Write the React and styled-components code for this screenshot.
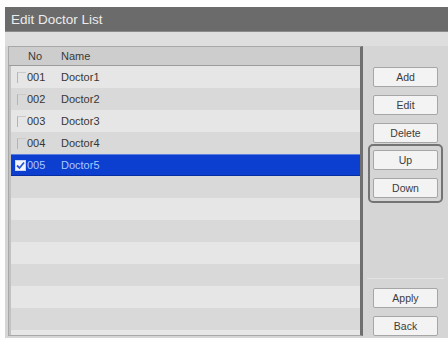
import React from 'react';
import styled, { createGlobalStyle } from 'styled-components';

const Global = createGlobalStyle`
  html, body { margin: 0; padding: 0; background: #fdfdfd; }
  body { font-family: "Liberation Sans", Arial, sans-serif; }
`;

const Win = styled.div`
  margin: 7px 0 0 5px;
  width: 443px;
  height: 331px;
  display: flex;
  flex-direction: column;
  background: #d5d5d5;
  overflow: hidden;
`;

const TitleBar = styled.div`
  flex-shrink: 0;
  height: 25px;
  box-sizing: border-box;
  background: #6b6b6b;
  color: #ececec;
  font-size: 13.5px;
  display: flex;
  align-items: center;
  padding-left: 6px;
  border-bottom: 1px solid #8a8a8a;
`;

const Body = styled.div`
  flex: 1;
  min-height: 0;
  display: flex;
  padding: 14px 0 2px 3px;
  background: linear-gradient(#dedede 0, #dedede 14px, #d5d5d5 14px);
`;

const ListBox = styled.div`
  width: 351px;
  min-height: 0;
  display: flex;
  flex-direction: column;
  border: 1px solid #a8a8a8;
  border-right: 3px solid #6f6f6f;
  overflow: hidden;
`;

const Header = styled.div`
  flex-shrink: 0;
  height: 18px;
  display: flex;
  align-items: center;
  background: #cdcdcd;
  border-bottom: 1px solid #9c9c9c;
  font-size: 11px;
  color: #3a3a3a;
`;

const Rows = styled.div`
  flex: 1;
  min-height: 0;
  overflow: hidden;
  border-left: 2px solid #c2c2c2;
`;

const Row = styled.div`
  height: 22px;
  box-sizing: border-box;
  display: flex;
  align-items: center;
  font-size: 11px;
  color: ${p => (p.$sel ? '#a9c8ff' : '#363636')};
  background: ${p => (p.$sel ? '#0c3ed0' : p.$odd ? '#d9d9d9' : '#e6e6e6')};
  ${p => p.$sel && 'border-top: 1px solid #5a7fe0; border-bottom: 1px solid #062ea0;'}
`;

const CheckCell = styled.div`
  width: 15px;
  display: flex;
  justify-content: flex-end;
  padding-right: 1px;
`;

const Box = styled.span`
  width: 9px;
  height: 11px;
  box-sizing: border-box;
  border-left: 1px solid #b4b4b4;
  border-top: 1px solid #cacaca;
`;

const CheckedBox = styled.span`
  width: 11px;
  height: 11px;
  box-sizing: border-box;
  background: #f4f6ff;
  border: 1px solid #c8d4f4;
  display: flex;
  align-items: center;
  justify-content: center;
`;

const NoCell = styled.div`
  width: ${p => (p.$head ? '52px' : '34px')};
  padding-left: ${p => (p.$head ? '19px' : '0')};
  box-sizing: border-box;
`;

const NameCell = styled.div`
  flex: 1;
`;

const Side = styled.div`
  flex: 1;
  display: flex;
  flex-direction: column;
  align-items: center;
  padding-top: 21px;
`;

const Btn = styled.div`
  width: 65px;
  height: 20px;
  box-sizing: border-box;
  flex-shrink: 0;
  display: flex;
  align-items: center;
  justify-content: center;
  background: #f3f3f3;
  border: 1px solid #a6a6a6;
  border-radius: 2px;
  font-size: 10.5px;
  color: #3c3c3c;
  margin-bottom: ${p => p.$mb ?? 8}px;
`;

const Group = styled.div`
  border: 2px solid #747474;
  border-radius: 5px;
  padding: 4px 3px 3px;
  display: flex;
  flex-direction: column;
  gap: 8px;
`;

const Spacer = styled.div`
  flex: 1;
`;

const Sep = styled.div`
  align-self: stretch;
  height: 1px;
  background: #e2e2e2;
  margin: 0 4px 9px 4px;
`;

const data = [
  { no: '001', name: 'Doctor1' },
  { no: '002', name: 'Doctor2' },
  { no: '003', name: 'Doctor3' },
  { no: '004', name: 'Doctor4' },
  { no: '005', name: 'Doctor5', sel: true },
];

export default function App() {
  const rows = [...data];
  while (rows.length < 13) rows.push(null);
  return (
    <Win>
      <Global />
      <TitleBar>Edit Doctor List</TitleBar>
      <Body>
        <ListBox>
          <Header>
            <NoCell $head>No</NoCell>
            <NameCell>Name</NameCell>
          </Header>
          <Rows>
            {rows.map((r, i) => (
              <Row key={i} $odd={i % 2 === 1} $sel={r && r.sel}>
                {r && (
                  <>
                    <CheckCell>
                      {r.sel ? (
                        <CheckedBox>
                          <svg width="9" height="9" viewBox="0 0 9 9">
                            <path d="M1 4.5 L3.5 7 L8 1.5" stroke="#2a55d8" strokeWidth="1.8" fill="none" />
                          </svg>
                        </CheckedBox>
                      ) : (
                        <Box />
                      )}
                    </CheckCell>
                    <NoCell>{r.no}</NoCell>
                    <NameCell>{r.name}</NameCell>
                  </>
                )}
              </Row>
            ))}
          </Rows>
        </ListBox>
        <Side>
          <Btn>Add</Btn>
          <Btn>Edit</Btn>
          <Btn $mb={1}>Delete</Btn>
          <Group>
            <Btn $mb={0}>Up</Btn>
            <Btn $mb={0}>Down</Btn>
          </Group>
          <Spacer />
          <Sep />
          <Btn>Apply</Btn>
          <Btn $mb={0}>Back</Btn>
        </Side>
      </Body>
    </Win>
  );
}
